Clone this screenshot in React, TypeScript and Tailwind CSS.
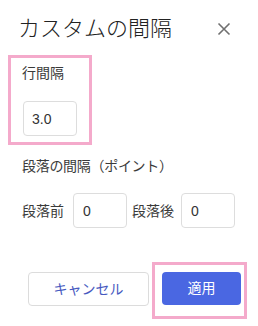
import React from "react";

function CloseIcon() {
  return (
    <svg width="14" height="14" viewBox="0 0 14 14" className="text-[#707070]">
      <path d="M1.5 1.5 L12.5 12.5 M12.5 1.5 L1.5 12.5" stroke="currentColor" strokeWidth="1.6" />
    </svg>
  );
}

export default function App() {
  const font = { fontFamily: '"Liberation Sans", "Noto Sans CJK JP", sans-serif' };

  return (
    <div className="relative w-[258px] h-[326px] bg-white text-[#3a3a3a]" style={font}>
      {/* header */}
      <div className="flex items-center justify-between pt-[14px] pl-[18px] pr-[27px] h-[44px]">
        <h1 className="text-[22px] leading-[30px] font-light text-[#222]">カスタムの間隔</h1>
        <button className="flex items-center justify-center">
          <CloseIcon />
        </button>
      </div>

      <div className="pl-[22px]">
        <div className="mt-[19px] text-[14px] leading-[20px]">行間隔</div>
        <input
          readOnly
          defaultValue="3.0"
          className="mt-[18px] ml-[1px] block w-[54px] h-[35px] rounded-[4px] border border-[#dddddd] pl-[8px] text-[14px] text-[#333] outline-none"
        />

        <div className="mt-[20px] text-[14px] leading-[20px] tracking-[-0.3px]">段落の間隔（ポイント）</div>

        <div className="mt-[17px] flex items-center text-[14px]">
          <span className="w-[42px] leading-[20px]">段落前</span>
          <input
            readOnly
            defaultValue="0"
            className="ml-[9px] block w-[54px] h-[35px] rounded-[4px] border border-[#dddddd] pl-[9px] text-[14px] text-[#333] outline-none"
          />
          <span className="ml-[5px] w-[42px] leading-[20px]">段落後</span>
          <input
            readOnly
            defaultValue="0"
            className="ml-[7px] block w-[54px] h-[35px] rounded-[4px] border border-[#dddddd] pl-[9px] text-[14px] text-[#333] outline-none"
          />
        </div>
      </div>

      {/* footer */}
      <div className="mt-[44px] flex pl-[28px] gap-[13px]">
        <button className="w-[121px] h-[34px] rounded-[4px] border border-[#dcdcdc] bg-white text-[14px] text-[#4659c0]">
          キャンセル
        </button>
        <button className="w-[79px] h-[33px] rounded-[4px] bg-[#4a67e2] text-[14px] text-white">
          適用
        </button>
      </div>

      {/* highlight marks */}
      <div className="absolute left-[8px] top-[55px] w-[84px] h-[90px] border-[3px] border-[#f4aacb] pointer-events-none" />
      <div className="absolute left-[152px] top-[262px] w-[95px] h-[57px] border-[3px] border-[#f4aacb] pointer-events-none" />
    </div>
  );
}
